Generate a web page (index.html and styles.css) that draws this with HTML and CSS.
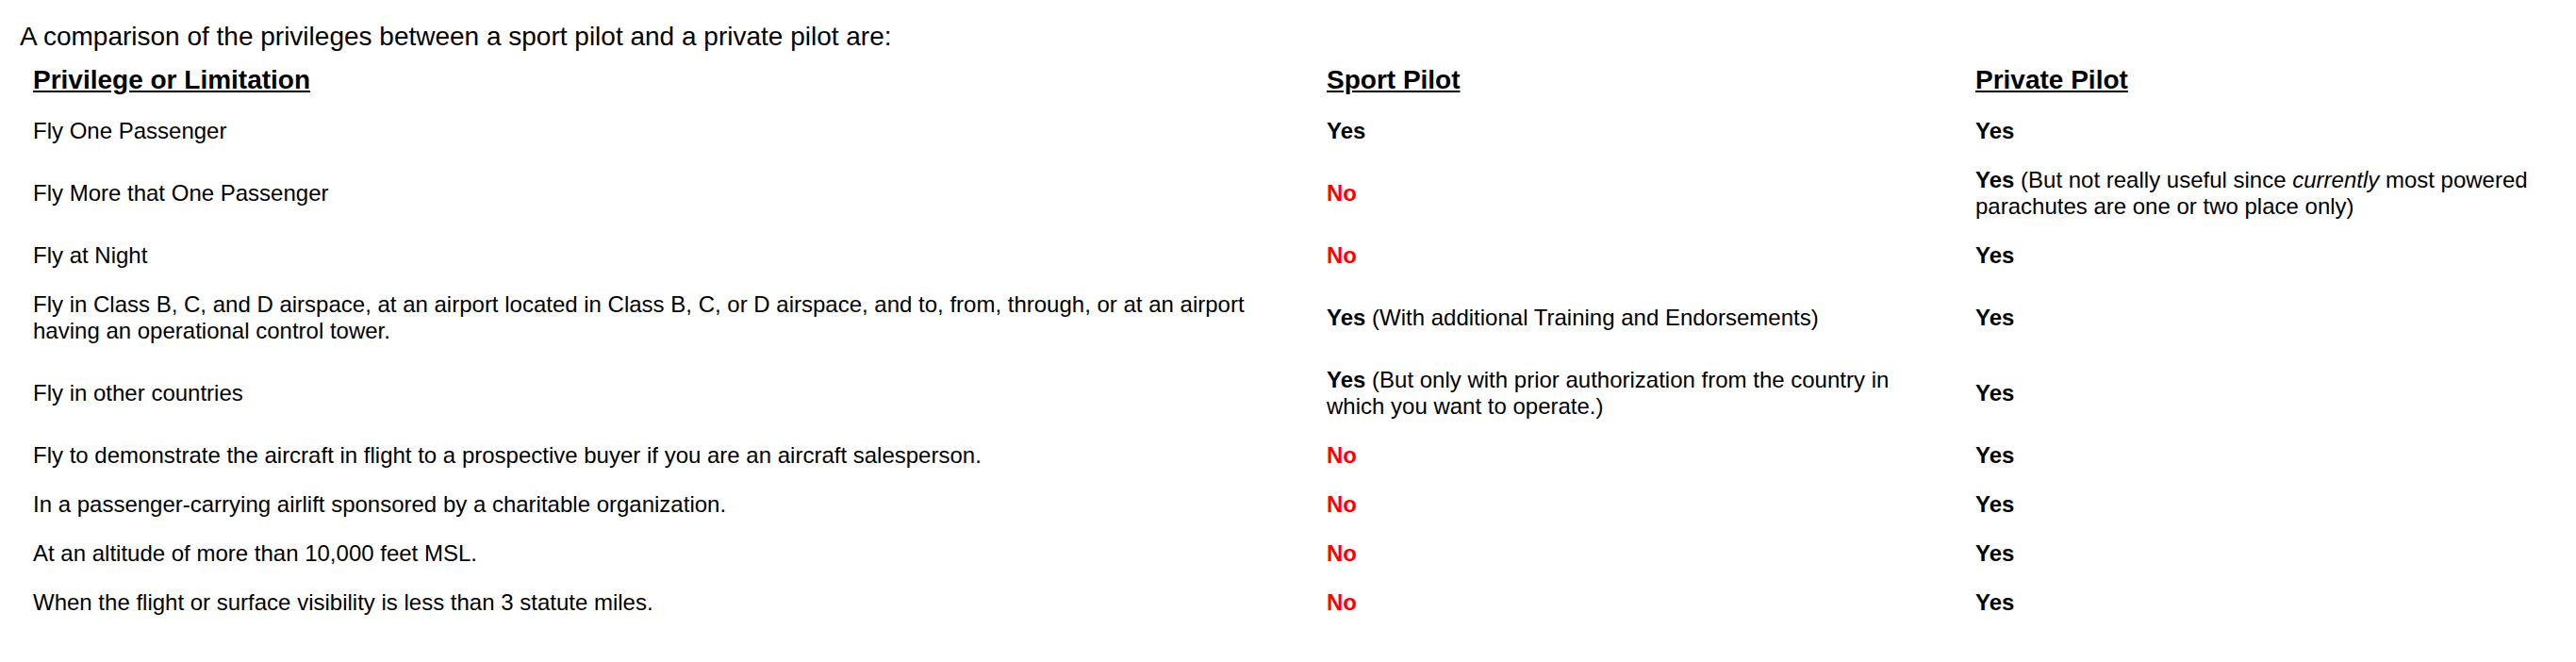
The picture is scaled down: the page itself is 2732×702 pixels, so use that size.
FILE: index.html
```html
<!DOCTYPE html>
<html lang="en">
<head>
<meta charset="utf-8">
<title>Sport Pilot vs Private Pilot</title>
<link rel="stylesheet" href="styles.css">
</head>
<body>
<div class="page">
  <p class="intro">A comparison of the privileges between a sport pilot and a private pilot are:</p>
  <table class="compare">
    <colgroup>
      <col class="col-priv">
      <col class="col-sport">
      <col class="col-private">
    </colgroup>
    <thead>
      <tr>
        <th class="cell-priv">Privilege or Limitation</th>
        <th class="cell-sport">Sport Pilot</th>
        <th class="cell-private">Private Pilot</th>
      </tr>
    </thead>
    <tbody>
      <tr>
        <td class="cell-priv">Fly One Passenger</td>
        <td class="cell-sport"><b>Yes</b></td>
        <td class="cell-private"><b>Yes</b></td>
      </tr>
      <tr>
        <td class="cell-priv">Fly More that One Passenger</td>
        <td class="cell-sport"><b class="no">No</b></td>
        <td class="cell-private"><b>Yes</b> (But not really useful since <i>currently</i> most powered parachutes are one or two place only)</td>
      </tr>
      <tr>
        <td class="cell-priv">Fly at Night</td>
        <td class="cell-sport"><b class="no">No</b></td>
        <td class="cell-private"><b>Yes</b></td>
      </tr>
      <tr>
        <td class="cell-priv">Fly in Class B, C, and D airspace, at an airport located in Class B, C, or D airspace, and to, from, through, or at an airport having an operational control tower.</td>
        <td class="cell-sport"><b>Yes</b> (With additional Training and Endorsements)</td>
        <td class="cell-private"><b>Yes</b></td>
      </tr>
      <tr>
        <td class="cell-priv">Fly in other countries</td>
        <td class="cell-sport"><b>Yes</b> (But only with prior authorization from the country in which you want to operate.)</td>
        <td class="cell-private"><b>Yes</b></td>
      </tr>
      <tr>
        <td class="cell-priv">Fly to demonstrate the aircraft in flight to a prospective buyer if you are an aircraft salesperson.</td>
        <td class="cell-sport"><b class="no">No</b></td>
        <td class="cell-private"><b>Yes</b></td>
      </tr>
      <tr>
        <td class="cell-priv">In a passenger-carrying airlift sponsored by a charitable organization.</td>
        <td class="cell-sport"><b class="no">No</b></td>
        <td class="cell-private"><b>Yes</b></td>
      </tr>
      <tr>
        <td class="cell-priv">At an altitude of more than 10,000 feet MSL.</td>
        <td class="cell-sport"><b class="no">No</b></td>
        <td class="cell-private"><b>Yes</b></td>
      </tr>
      <tr>
        <td class="cell-priv">When the flight or surface visibility is less than 3 statute miles.</td>
        <td class="cell-sport"><b class="no">No</b></td>
        <td class="cell-private"><b>Yes</b></td>
      </tr>
    </tbody>
  </table>
</div>
</body>
</html>
```

FILE: styles.css
```css
html, body {
  margin: 0;
  padding: 0;
  background: #ffffff;
}

body {
  font-family: "Liberation Sans", Arial, Helvetica, sans-serif;
  color: #000000;
}

.page {
  padding: 23px 21px 0 21px;
}

.intro {
  margin: 0;
  font-size: 28px;
  line-height: 32px;
}

.compare {
  margin-top: 2px;
  width: 2690px;
  table-layout: fixed;
  border-collapse: collapse;
  border-spacing: 0;
}

.col-priv { width: 1374px; }
.col-sport { width: 688px; }
.col-private { width: 628px; }

.compare th {
  font-size: 28px;
  line-height: 32px;
  font-weight: bold;
  text-decoration: underline;
  text-align: left;
  vertical-align: middle;
  padding-top: 12px;
  padding-bottom: 12px;
}

.compare td {
  font-size: 24px;
  line-height: 28px;
  text-align: left;
  vertical-align: middle;
  padding-top: 12px;
  padding-bottom: 12px;
}

.cell-priv {
  padding-left: 14px;
  padding-right: 12px;
}

.cell-sport {
  padding-left: 12px;
  padding-right: 26px;
}

.cell-private {
  padding-left: 12px;
  padding-right: 12px;
}

.compare b {
  font-weight: bold;
}

.compare .no {
  color: #ff0000;
}
```
